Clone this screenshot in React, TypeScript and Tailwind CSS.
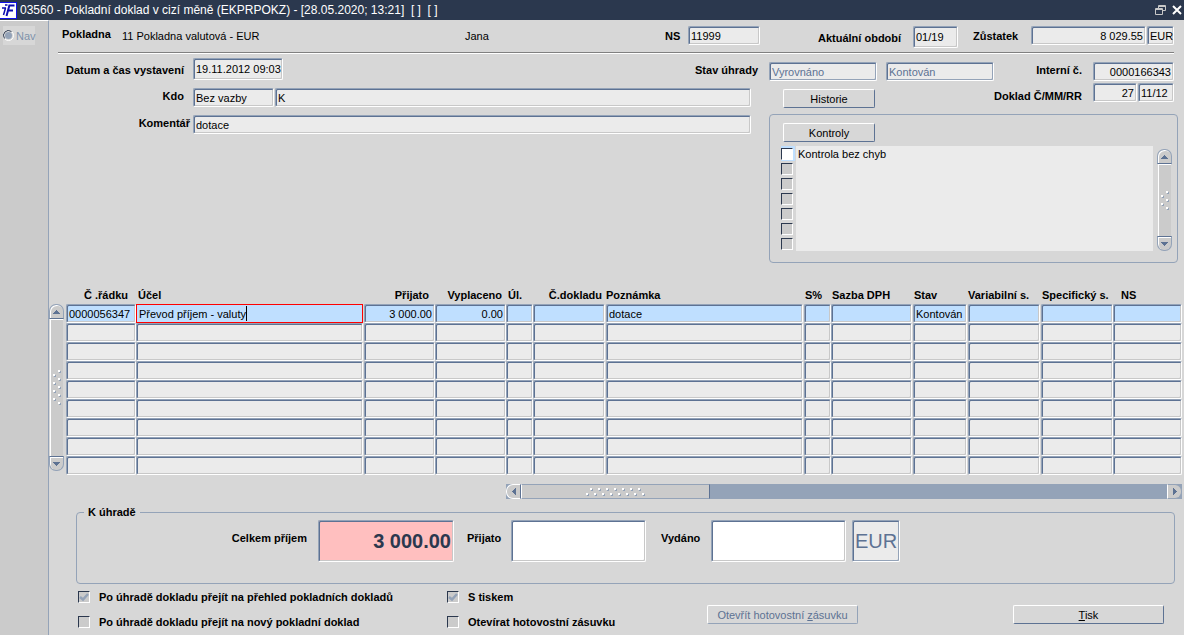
import { useState } from 'react';
import type { InputHTMLAttributes, ReactNode } from 'react';
import clsx from 'clsx';

interface Row {
  lineNo: string;
  purpose: string;
  received: string;
  paidOut: string;
  account: string;
  docNo: string;
  note: string;
  vatCode: string;
  vatRate: string;
  status: string;
  variable: string;
  specific: string;
  ns: string;
}

interface Column {
  key: keyof Row;
  label: string;
  col: string;
  head: string;
  cell: string;
  numeric?: boolean;
}

const COLUMNS: Column[] = [
  { key: 'lineNo', label: 'Č .řádku', col: 'w-[70px]', head: 'text-right pr-2', cell: '' },
  { key: 'purpose', label: 'Účel', col: 'w-[228px]', head: 'pl-0.5', cell: 'pr-px' },
  { key: 'received', label: 'Přijato', col: 'w-[71px]', head: 'text-right pr-1.5', cell: '', numeric: true },
  { key: 'paidOut', label: 'Vyplaceno', col: 'w-[71px]', head: 'text-right pr-1', cell: '', numeric: true },
  { key: 'account', label: 'Úl.', col: 'w-[27px]', head: 'pl-0.5', cell: '' },
  { key: 'docNo', label: 'Č.dokladu', col: 'w-[73px]', head: 'text-right pr-1', cell: 'pr-px' },
  { key: 'note', label: 'Poznámka', col: '', head: '', cell: 'pr-px' },
  { key: 'vatCode', label: 'S%', col: 'w-[27px]', head: 'pl-px', cell: '' },
  { key: 'vatRate', label: 'Sazba DPH', col: 'w-[82px]', head: 'pl-px', cell: 'pr-px' },
  { key: 'status', label: 'Stav', col: 'w-[55px]', head: 'pl-px', cell: 'pr-px' },
  { key: 'variable', label: 'Variabilní s.', col: 'w-[73px]', head: '', cell: 'pr-px' },
  { key: 'specific', label: 'Specifický s.', col: 'w-[72px]', head: 'pl-px', cell: '' },
  { key: 'ns', label: 'NS', col: 'w-[69px]', head: 'pl-2', cell: '' },
];

const EMPTY_ROW: Row = {
  lineNo: '',
  purpose: '',
  received: '',
  paidOut: '',
  account: '',
  docNo: '',
  note: '',
  vatCode: '',
  vatRate: '',
  status: '',
  variable: '',
  specific: '',
  ns: '',
};

const ROWS: Row[] = [
  {
    ...EMPTY_ROW,
    lineNo: '0000056347',
    purpose: 'Převod příjem - valuty',
    received: '3 000.00',
    paidOut: '0.00',
    note: 'dotace',
    status: 'Kontován',
  },
  ...Array.from({ length: 8 }, () => ({ ...EMPTY_ROW })),
];

const CHECKS = ['Kontrola bez chyb', '', '', '', '', '', ''];

const SUNKEN =
  'border border-t-[#94a3b8] border-l-[#94a3b8] border-b-white border-r-white rounded-[2px] outline-none shadow-[inset_1px_1px_0_#5d7293,inset_-1px_-1px_0_#c8c8c8] disabled:shadow-[inset_1px_1px_0_#5d7293,inset_-1px_-1px_0_#94a3b8]';

function Field({ className, ...rest }: InputHTMLAttributes<HTMLInputElement>) {
  return <input type="text" className={clsx(SUNKEN, 'min-w-0 pl-0.5', className)} {...rest} />;
}

function Button({ className, children, disabled }: { className?: string; children: ReactNode; disabled?: boolean }) {
  return (
    <button
      type="button"
      disabled={disabled}
      className={clsx(
        'h-[19px] rounded-[2px] border border-t-white border-l-white bg-[#d7d7d7]',
        disabled ? 'border-b-[#94a3b8] border-r-[#94a3b8] text-[#5d7293]' : 'border-b-[#5d7293] border-r-[#5d7293]',
        className,
      )}
    >
      {children}
    </button>
  );
}

function Dots({ count }: { count: number }) {
  return (
    <svg width="8" height={count * 4} aria-hidden="true">
      {Array.from({ length: count }, (_, i) => (
        <g key={i}>
          <rect x={i % 2 ? 1 : 6} y={i * 4 + 1} width="2" height="2" fill="#94a3b8" />
          <rect x={i % 2 ? 0 : 5} y={i * 4} width="2" height="2" fill="#fff" />
        </g>
      ))}
    </svg>
  );
}

function VerticalScroll({ dots, className }: { dots: number; className?: string }) {
  return (
    <div className={clsx('flex w-[15px] shrink-0 flex-col items-center', className)}>
      <button type="button" aria-label="Nahoru" className="flex h-[15px] w-[15px] items-center justify-center rounded-t-[7px] border border-[#94a3b8] border-b-[#5d7293] bg-[#cbcbcb] shadow-[inset_1px_1px_0_#fff]">
        <svg width="7" height="4" aria-hidden="true"><path d="M3 0h1v1h1v1h1v1h1v1H0V3h1V2h1V1h1z" fill="#5d7293" /></svg>
      </button>
      <div className="flex w-[13px] flex-1 items-center justify-center border-t border-l border-white bg-[#cbcbcb]">
        <Dots count={dots} />
      </div>
      <button type="button" aria-label="Dolů" className="flex h-[15px] w-[15px] items-center justify-center rounded-b-[7px] border border-[#94a3b8] border-t-[#5d7293] bg-[#cbcbcb] shadow-[inset_1px_1px_0_#fff]">
        <svg width="7" height="4" aria-hidden="true"><path d="M0 0h7v1H6v1H5v1H4v1H3V3H2V2H1V1H0z" fill="#5d7293" /></svg>
      </button>
    </div>
  );
}

function HorizontalScroll() {
  return (
    <div className="flex h-[15px] bg-[#94a3b8]">
      <button type="button" aria-label="Vlevo" className="flex w-[15px] items-center justify-center rounded-l-[7px] border border-white border-r-[#5d7293] bg-[#cbcbcb]">
        <svg width="4" height="7" aria-hidden="true"><path d="M4 0v7H3V6H2V5H1V4H0V3h1V2h1V1h1V0z" fill="#5d7293" /></svg>
      </button>
      <div className="flex w-[28%] items-center justify-center border border-t-[#94a3b8] border-b-[#94a3b8] border-l-white border-r-[#5d7293] bg-[#cbcbcb]">
        <svg width="59" height="8" aria-hidden="true">
          {Array.from({ length: 15 }, (_, i) => (
            <g key={i}>
              <rect x={i * 4 + 1} y={i % 2 ? 1 : 6} width="2" height="2" fill="#94a3b8" />
              <rect x={i * 4} y={i % 2 ? 0 : 5} width="2" height="2" fill="#fff" />
            </g>
          ))}
        </svg>
      </div>
      <button type="button" aria-label="Vpravo" className="ml-auto flex w-[15px] items-center justify-center rounded-r-[7px] border border-[#94a3b8] border-l-white bg-[#cbcbcb]">
        <svg width="4" height="7" aria-hidden="true"><path d="M0 0h1v1h1v1h1v1h1v1H3v1H2v1H1v1H0z" fill="#5d7293" /></svg>
      </button>
    </div>
  );
}

const BOX =
  'h-3 w-3 shrink-0 appearance-none border border-t-[#2b384e] border-l-[#2b384e] border-b-white border-r-white';

function Option({ label, initial }: { label: string; initial?: boolean }) {
  const [checked, setChecked] = useState(!!initial);
  return (
    <label className="flex h-[25px] items-center gap-[9px] font-bold">
      <span className="grid">
        <input
          type="checkbox"
          checked={checked}
          onChange={(e) => setChecked(e.target.checked)}
          className={clsx(BOX, 'col-start-1 row-start-1 bg-[#cbcbcb]')}
        />
        {checked && (
          <svg width="12" height="12" className="pointer-events-none col-start-1 row-start-1" aria-hidden="true">
            <path d="M2 6l3 2.500 5-5.500" fill="none" stroke="#94a3b8" strokeWidth="2.500" />
          </svg>
        )}
      </span>
      {label}
    </label>
  );
}

function Titlebar() {
  return (
    <header className="flex h-5 items-center bg-[#2b384e] text-xs text-white">
      <svg width="17" height="17" viewBox="0 0 17 17" className="mr-[3px]" aria-hidden="true">
        <path d="M0 0h17v17H0z" fill="#1010e8" />
        <path d="M0 1h16v15H0z" fill="#fff" />
        <path d="M2 6h4M5 3h2.500M5.500 6l-2 7" stroke="#0c0cb0" strokeWidth="1.500" fill="none" />
        <path d="M8.500 3.500h6M9.500 3L6.500 14M8 8.500h5" stroke="#0c0cb0" strokeWidth="2" fill="none" />
      </svg>
      <h1 className="flex-1 truncate whitespace-pre">03560 - Pokladní doklad v cizí měně (EKPRPOKZ) - [28.05.2020; 13:21]  [ ]  [ ]</h1>
      <button type="button" aria-label="Obnovit" className="mr-1.5">
        <svg width="11" height="10" className="block" aria-hidden="true">
          <path d="M3.500 3V.500h7v5H8M.500 3.500h7v6h-7zM0 4.500h8M3 1.500h8" fill="none" stroke="#c8c8c8" />
        </svg>
      </button>
      <button type="button" aria-label="Zavřít" className="mr-0.5">
        <svg width="10" height="10" className="block" aria-hidden="true">
          <path d="M1 1l8 8M9 1l-8 8" fill="none" stroke="#fff" strokeWidth="2" />
        </svg>
      </button>
    </header>
  );
}

export default function App() {
  const [rows, setRows] = useState(ROWS);
  const [active, setActive] = useState(0);
  const [touched, setTouched] = useState(false);

  function update(index: number, key: keyof Row, value: string) {
    setRows(rows.map((r, i) => (i === index ? { ...r, [key]: value } : r)));
  }

  function focusRow(index: number) {
    setActive(index);
    setTouched(true);
  }

  return (
    <div className="flex min-h-screen flex-col bg-[#d7d7d7] font-['Liberation_Sans',Arial,sans-serif] text-[11px] leading-[14px] text-black">
      <Titlebar />
      <div className="flex flex-1">
        <aside className="w-[49px] shrink-0 border-t border-r border-t-white border-r-[#94a3b8] bg-[#cbcbcb] pt-[5px] pl-[3px]">
          <label className="flex h-[19px] w-8 items-center gap-0.5 bg-[#d7d7d7] text-[#7f93ab]">
            <svg width="11" height="11" viewBox="0 0 11 11" className="shrink-0" aria-hidden="true">
              <circle cx="5.500" cy="5.500" r="5" fill="#d7d7d7" stroke="#fff" />
              <path d="M1.500 8.500a5 5 0 0 1 7-7" fill="none" stroke="#2b384e" />
              <circle cx="5.500" cy="5.500" r="3.500" fill="#94a3b8" />
            </svg>
            <input type="radio" disabled className="sr-only" />
            Nav
          </label>
        </aside>

        <main className="min-w-0 flex-1">
          <section className="mr-2.5 ml-[9px] flex h-[34px] items-start border-b border-b-white pt-1.5 pl-1 shadow-[inset_0_-1px_0_#808080]">
            <b className="w-[60px] pt-px">Pokladna</b>
            <span className="w-[343px] pt-[3px]">11 Pokladna valutová - EUR</span>
            <span className="flex-1 pt-[3px]">Jana</span>
            <label htmlFor="ns" className="w-[23px] pt-[3px] font-bold">NS</label>
            <Field id="ns" defaultValue="11999" className="h-[19px] w-[72px] bg-[#ebebeb]" />
            <label htmlFor="period" className="ml-[58px] w-[95px] pt-[5px] font-bold">Aktuální období</label>
            <Field id="period" defaultValue="01/19" className="h-[22px] w-[45px] bg-[#ebebeb]" />
            <label htmlFor="balance" className="ml-[15px] w-[58px] pt-[3px] font-bold">Zůstatek</label>
            <Field id="balance" defaultValue="8 029.55" className="h-[19px] w-[115px] bg-[#ebebeb] pr-0.5 text-right" />
            <Field aria-label="Měna" defaultValue="EUR" className="ml-px h-[19px] w-[27px] bg-[#ebebeb]" />
          </section>

          <div className="flex">
            <section className="min-w-0 flex-1 pt-1">
              <div className="flex h-[30px] items-start">
                <label htmlFor="issued" className="w-[135px] pt-[5px] text-right font-bold">Datum a čas vystavení</label>
                <Field id="issued" defaultValue="19.11.2012 09:03" className="ml-[9px] h-[22px] w-[90px] bg-[#ebebeb]" />
                <label htmlFor="payment" className="mr-[11px] ml-auto pt-[5px] font-bold">Stav úhrady</label>
              </div>
              <div className="flex h-[27px] items-start pr-[18px]">
                <label htmlFor="who" className="w-[135px] pt-px text-right font-bold">Kdo</label>
                <Field id="who" defaultValue="Bez vazby" className="ml-[9px] h-[19px] w-[81px] bg-[#ebebeb]" />
                <Field aria-label="Jméno" defaultValue="K" className="ml-px h-[19px] flex-1 bg-[#ebebeb]" />
              </div>
              <div className="flex h-[27px] items-start pr-[18px]">
                <label htmlFor="comment" className="w-[144px] pt-px pr-[3px] text-right font-bold">Komentář</label>
                <Field id="comment" defaultValue="dotace" className="h-[19px] flex-1 bg-[#ebebeb]" />
              </div>
            </section>

            <section className="w-[415px] shrink-0 pt-2 pr-1.5">
              <div className="flex justify-between pr-1">
                <div>
                  <div className="flex gap-[9px]">
                    <Field id="payment" disabled defaultValue="Vyrovnáno" className="h-[19px] w-[108px] bg-[#ebebeb] text-[#5d7293]" />
                    <Field aria-label="Stav dokladu" disabled defaultValue="Kontován" className="h-[19px] w-[108px] bg-[#ebebeb] text-[#5d7293]" />
                  </div>
                  <Button className="mt-2 ml-3.5 w-[92px]">Historie</Button>
                </div>
                <div>
                  <div className="flex justify-end">
                    <label htmlFor="internal" className="mr-[11px] pt-px font-bold">Interní č.</label>
                    <Field id="internal" defaultValue="0000166343" className="h-[19px] w-[81px] bg-[#ebebeb] pr-0.5 text-right" />
                  </div>
                  <div className="mt-0.5 flex justify-end">
                    <label htmlFor="doc" className="mr-[11px] pt-1.5 font-bold">Doklad Č/MM/RR</label>
                    <Field id="doc" defaultValue="27" className="h-[19px] w-11 bg-[#ebebeb] pr-0.5 text-right" />
                    <Field aria-label="MM/RR" defaultValue="11/12" className="ml-px h-[19px] w-9 bg-[#ebebeb]" />
                  </div>
                </div>
              </div>

              <div className="mt-1.5 h-[149px] rounded-[4px] border border-[#94a3b8] pt-2">
                <Button className="ml-[13px] w-[92px]">Kontroly</Button>
                <div className="mt-1 flex">
                  <ul className="flex-1">
                    {CHECKS.map((text, i) => (
                      <li key={i} className="flex h-[15px] items-center">
                        <label className="flex w-full items-center">
                          <span className={clsx('ml-[11px] flex h-[15px] w-3.5 items-center', i === 0 && 'bg-[#bfdfff]')}>
                            <input type="checkbox" aria-label={text || `Kontrola ${i + 1}`} className={clsx(BOX, i === 0 ? 'bg-white' : 'bg-[#cbcbcb]')} />
                          </span>
                          <span className="ml-px flex h-[15px] flex-1 items-center bg-[#ebebeb] pl-0.5">{text}</span>
                        </label>
                      </li>
                    ))}
                  </ul>
                  <VerticalScroll dots={5} className="mt-[3px] mr-[5px] ml-1" />
                </div>
              </div>
            </section>
          </div>

          <section className="mt-[25px] mr-0.5 flex">
            <VerticalScroll dots={9} className="mt-4 mr-0.5 mb-1" />
            <div className="min-w-0 flex-1">
              <table className="w-full table-fixed border-collapse">
                <colgroup>
                  {COLUMNS.map((c) => <col key={c.key} className={c.col} />)}
                </colgroup>
                <thead>
                  <tr className="h-4">
                    {COLUMNS.map((c) => (
                      <th key={c.key} className={clsx('py-0 text-left align-top font-bold whitespace-nowrap', c.head)}>{c.label}</th>
                    ))}
                  </tr>
                </thead>
                <tbody>
                  {rows.map((row, i) => (
                    <tr key={i} className="h-[19px]">
                      {COLUMNS.map((c) => {
                        const current = i === 0 && c.key === 'purpose';
                        return (
                          <td key={c.key} className={clsx('relative p-0', c.cell)}>
                            <input
                              type="text"
                              aria-label={`${c.label} ${i + 1}`}
                              value={row[c.key]}
                              onFocus={() => focusRow(i)}
                              onChange={(e) => update(i, c.key, e.target.value)}
                              className={clsx(
                                'block h-[19px] w-full',
                                i === active ? 'bg-[#bfdfff]' : 'bg-[#ebebeb]',
                                c.numeric ? 'pr-0.5 text-right' : 'pl-0.5',
                                current ? 'border border-[#f00] outline-none' : SUNKEN,
                              )}
                            />
                            {/* resting caret until the user takes focus */}
                            {current && !touched && (
                              <span className="pointer-events-none absolute top-0.5 left-[110px] h-[15px] w-px bg-black" />
                            )}
                          </td>
                        );
                      })}
                    </tr>
                  ))}
                </tbody>
              </table>
            </div>
          </section>

          <div className="mt-[9px] mr-0.5 ml-[457px]">
            <HorizontalScroll />
          </div>

          <fieldset className="mt-1.5 mr-[9px] ml-[27px] h-[79px] rounded-[4px] border border-[#94a3b8]">
            <legend className="ml-[7px] px-1 font-bold">K úhradě</legend>
            <div className="flex items-start pt-px">
              <label htmlFor="total" className="w-[230px] pt-[11px] text-right font-bold">Celkem příjem</label>
              <Field id="total" defaultValue="3 000.00" className="ml-[11px] h-[42px] w-[136px] bg-[#ffbfbf] pr-0.5 text-right text-xl font-bold text-[#2b384e]" />
              <label htmlFor="received" className="ml-[13px] w-11 pt-[11px] font-bold">Přijato</label>
              <Field id="received" className="h-[42px] w-[135px] bg-white text-xl" />
              <label htmlFor="returned" className="ml-[15px] w-[50px] pt-[11px] font-bold">Vydáno</label>
              <Field id="returned" className="h-[42px] w-[135px] bg-white text-xl" />
              <Field aria-label="Měna úhrady" disabled defaultValue="EUR" className="ml-1.5 h-[42px] w-12 bg-[#ebebeb] text-xl text-[#5d7293]" />
            </div>
          </fieldset>

          <div className="flex items-start pl-[29px]">
            <div className="w-[369px]">
              <Option label="Po úhradě dokladu přejít na přehled pokladních dokladů" initial />
              <Option label="Po úhradě dokladu přejít na nový pokladní doklad" />
            </div>
            <div className="flex-1">
              <Option label="S tiskem" initial />
              <Option label="Otevírat hotovostní zásuvku" />
            </div>
            <Button disabled className="mt-[21px] w-[151px]">Otevřít hotovostní <u>z</u>ásuvku</Button>
            <Button className="mt-[21px] mr-5 ml-[155px] w-[151px]"><u>T</u>isk</Button>
          </div>
        </main>
      </div>
    </div>
  );
}
